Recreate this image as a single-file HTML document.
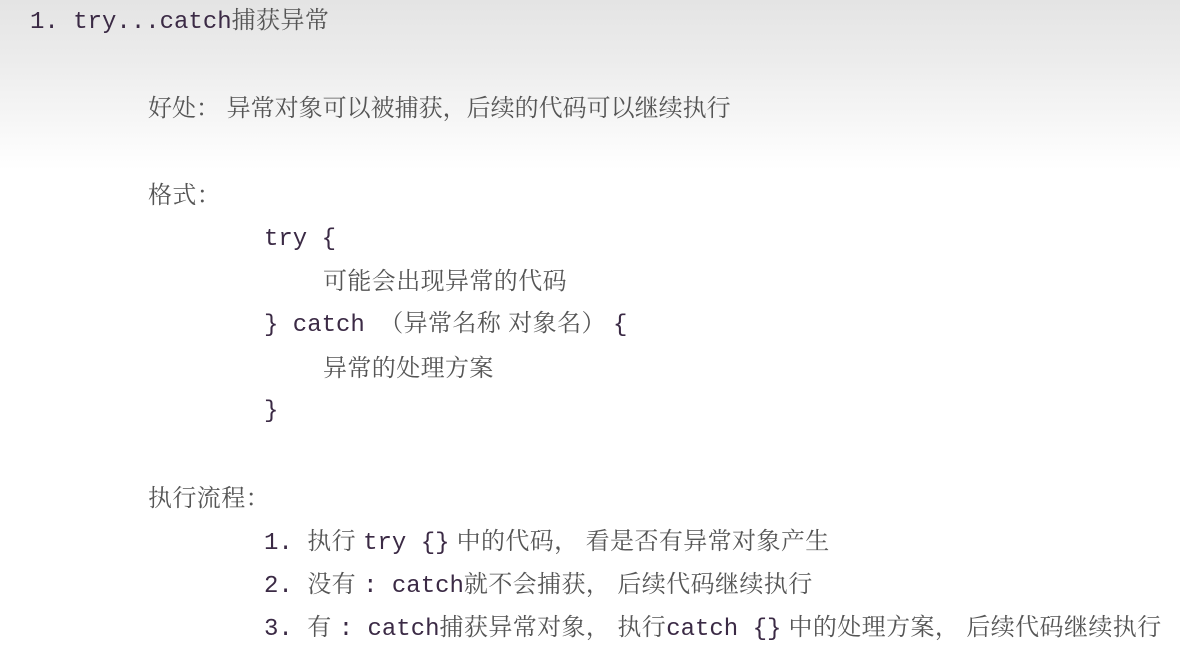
<!DOCTYPE html>
<html><head><meta charset="utf-8"><style>
html,body{margin:0;padding:0}
body{width:1180px;height:652px;overflow:hidden;position:relative;
background:linear-gradient(#e4e4e4 0px,#ececec 60px,#f8f8f8 130px,#fff 170px,#fff 100%);
font-family:"Liberation Sans","Noto Serif CJK SC",serif;color:#555}
.l{position:absolute;white-space:pre;line-height:30px;font-size:24px;letter-spacing:0.4px}
.m{font-family:"Liberation Mono",monospace;color:#3b2a45;font-size:24px;letter-spacing:0}
</style></head><body>
<div class="l" style="left:30px;top:6px"><span class="m">1. try...catch</span>捕获异常</div>
<div class="l" style="left:148px;top:94px;letter-spacing:0">好处： 异常对象可以被捕获，后续的代码可以继续执行</div>
<div class="l" style="left:148px;top:181px">格式：</div>
<div class="l" style="left:264px;top:223px"><span class="m">try {</span></div>
<div class="l" style="left:323px;top:267px">可能会出现异常的代码</div>
<div class="l" style="left:264px;top:309px"><span class="m">} catch </span>（异常名称 对象名） <span class="m">{</span></div>
<div class="l" style="left:323px;top:354px">异常的处理方案</div>
<div class="l" style="left:264px;top:395px"><span class="m">}</span></div>
<div class="l" style="left:148px;top:484px">执行流程：</div>
<div class="l" style="left:264px;top:527px"><span class="m">1. </span>执行 <span class="m">try {}</span> 中的代码， 看是否有异常对象产生</div>
<div class="l" style="left:264px;top:570px"><span class="m">2. </span>没有 <span class="m">: catch</span>就不会捕获， 后续代码继续执行</div>
<div class="l" style="left:264px;top:613px"><span class="m">3. </span>有 <span class="m">: catch</span>捕获异常对象， 执行<span class="m">catch {}</span> 中的处理方案， 后续代码继续执行</div>
</body></html>
